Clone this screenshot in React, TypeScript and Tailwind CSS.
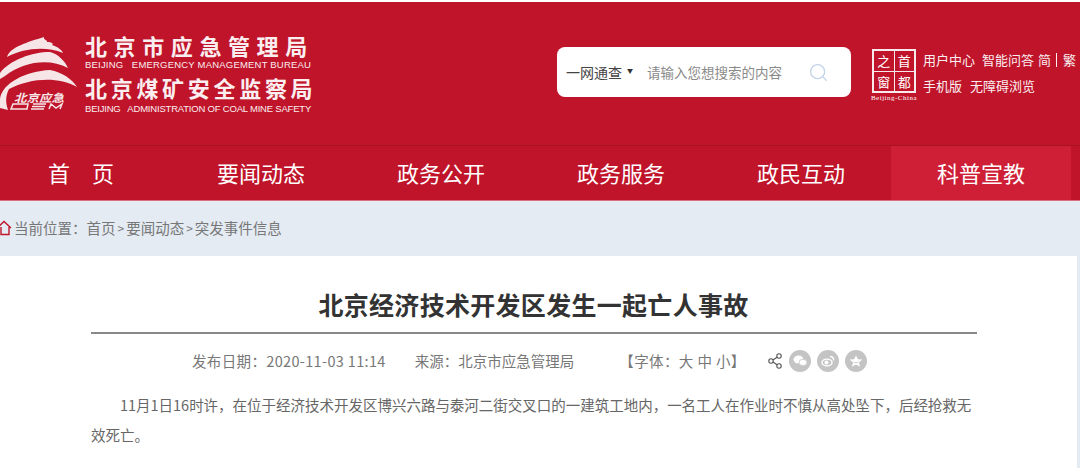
import React from 'react';
import { Search } from 'lucide-react';

const NAV = ['首　页', '要闻动态', '政务公开', '政务服务', '政民互动', '科普宣教'];

const Logo: React.FC = () => (
  <svg width="78" height="74" viewBox="0 0 78 74" className="shrink-0">
    <g fill="#f7e6e8">
      <path d="M7 20 C10 10 28 5 44 0 C43 3 48 3 47 5 C52 5 54 7 52 8 C58 10 62 13 63 16 C46 9 24 11 7 20 Z" />
      <path d="M0 36 C10 23 32 15 50 15 C58 17 65 24 68 31 C50 21 24 24 5 39 L0 42 Z" />
      <path d="M0 62 C2 46 26 34 50 33 C62 35 72 42 77 50 C58 39 30 41 9 52 C6 58 5 64 8 73 L0 71 Z" />
    </g>
    <text x="14" y="65" fill="#f7e6e8" fontSize="11" fontWeight="700" fontStyle="italic" fontFamily="'Noto Sans CJK SC', sans-serif" textLength="50" lengthAdjust="spacingAndGlyphs">北京应急</text>
    <g fill="none" stroke="#f7e6e8" strokeWidth="1.5">
      <path d="M13 67 H28 L27 72 H11 Z" />
      <path d="M33 67 H46 M32 69.5 H45 M31 72 H44" />
      <path d="M49 72 L51 67 L56 71 L62 67 L60 72" />
    </g>
  </svg>
);

const CapitalMark: React.FC = () => (
  <div className="flex flex-col items-center w-[48px] shrink-0">
    <div className="grid grid-cols-2 grid-rows-2 gap-[1px] w-[44px] h-[44px] border-2 border-[#f9e9eb] bg-[#f9e9eb]">
      <span className="bg-[#bf142a] flex items-center justify-center text-[13px] leading-none">之</span>
      <span className="bg-[#bf142a] flex items-center justify-center text-[13px] leading-none">首</span>
      <span className="bg-[#bf142a] flex items-center justify-center text-[13px] leading-none">窗</span>
      <span className="bg-[#bf142a] flex items-center justify-center text-[13px] leading-none">都</span>
    </div>
    <span className="text-[7px] leading-[9px] mt-[1px] whitespace-nowrap tracking-[0.5px] font-['Liberation_Serif',serif]">Beijing-China</span>
  </div>
);

const ShareDot: React.FC<{ children: React.ReactNode }> = ({ children }) => (
  <span className="w-[22px] h-[22px] rounded-full bg-[#c4c4c4] flex items-center justify-center">{children}</span>
);

const App: React.FC = () => {
  return (
    <div className="w-[1080px] h-[468px] overflow-hidden bg-white font-['Noto_Sans_CJK_SC','Liberation_Sans',sans-serif]">
      {/* Header */}
      <header className="mt-[2px] h-[144px] bg-[#bf142a] border-b border-[#a81225] text-white flex items-start">
        <div className="mt-[35px]"><Logo /></div>
        <div className="ml-[7px] mt-[29px] w-[228px] text-[#fbeef0]">
          <div className="text-[22px] leading-[28px] font-semibold tracking-[6.6px] whitespace-nowrap">北京市应急管理局</div>
          <div className="text-[9.5px] leading-[12px] whitespace-pre font-['Liberation_Sans',sans-serif] tracking-[0.2px]">BEIJING   EMERGENCY MANAGEMENT BUREAU</div>
          <div className="text-[22px] leading-[30px] font-semibold tracking-[3.7px] whitespace-nowrap mt-[1px]">北京煤矿安全监察局</div>
          <div className="text-[9.5px] leading-[14px] whitespace-pre font-['Liberation_Sans',sans-serif] tracking-[-0.2px]">BEIJING   ADMINISTRATION OF COAL MINE SAFETY</div>
        </div>
        {/* Search */}
        <div className="ml-[244px] mt-[45px] w-[294px] h-[50px] bg-white rounded-[8px] flex items-center pl-[9px] pr-[22px] text-[14px]">
          <span className="text-[#444444] whitespace-nowrap">一网通查</span>
          <span className="ml-[5px] mb-[2px] text-[#333333] text-[6px] leading-none">▼</span>
          <span className="ml-[14px] text-[#8a8a8a] text-[13.5px] whitespace-nowrap flex-1">请输入您想搜索的内容</span>
          <Search size={21} strokeWidth={1.5} className="text-[#c3d3e8]" />
        </div>
        {/* Links */}
        <div className="ml-[19px] mt-[47px]"><CapitalMark /></div>
        <div className="ml-[5px] mt-[44px] text-[13px] text-[#fbeef0] whitespace-nowrap">
          <div className="h-[27px] flex items-center">
            <span>用户中心</span>
            <span className="ml-[7px]">智能问答</span>
            <span className="ml-[4px]">简</span>
            <span className="ml-[5px] mr-[6px] w-[1px] h-[14px] bg-[#fbeef0]" />
            <span>繁</span>
          </div>
          <div className="h-[25px] flex items-center">
            <span>手机版</span>
            <span className="ml-[8px]">无障碍浏览</span>
          </div>
        </div>
      </header>

      {/* Nav */}
      <nav className="h-[55px] bg-[#bf142a] border-b border-[#d9707e] flex -ml-[9px] text-white text-[22px] w-[1089px]">
        {NAV.map((item, i) => (
          <a key={item} className={`w-[180px] pb-[2px] flex items-center justify-center whitespace-nowrap ${i === 5 ? 'bg-[#ce1f36]' : ''}`}>
            {item}
          </a>
        ))}
      </nav>

      {/* Breadcrumb */}
      <div className="h-[55px] pb-[2px] bg-[#e4ebf3] flex items-center text-[14.5px] text-[#777777] whitespace-nowrap">
        <svg width="12" height="18" viewBox="0 0 12 18" fill="none" stroke="#bf142a" strokeWidth="1.4" className="mr-[2px]">
          <path d="M-3 9 L4 2.5 L11 9" />
          <path d="M1 8 V15.5 H9 V8" />
        </svg>
        <span>当前位置：首页</span>
        <span className="text-[12px] mx-[2px]">&gt;</span>
        <span>要闻动态</span>
        <span className="text-[12px] mx-[2px]">&gt;</span>
        <span>突发事件信息</span>
      </div>

      {/* Article */}
      <div className="bg-[#e4ebf3] h-[212px] pr-[3px]">
        <article className="bg-white h-full px-[91px] text-[#666666]">
          <h1 className="pt-[31px] pr-[1px] w-[886px] h-[76px] text-center text-[25px] leading-[34px] font-bold text-[#333333] tracking-[0.3px]">北京经济技术开发区发生一起亡人事故</h1>
          <div className="border-t-2 border-[#888888] w-[886px]" />
          <div className="h-[54px] flex items-center text-[14.5px] text-[#777777] whitespace-nowrap pl-[101px] w-[886px]">
            <span className="tracking-[0.35px]">发布日期：2020-11-03 11:14</span>
            <span className="ml-[29px]">来源：北京市应急管理局</span>
            <span className="ml-[45px] tracking-[0.4px]">【字体：大 中 小】</span>
            <svg width="14" height="16" viewBox="0 0 14 16" fill="none" stroke="#555555" strokeWidth="1.1" className="ml-[22px]">
              <circle cx="3" cy="8" r="2.2" />
              <circle cx="11" cy="3" r="2.2" />
              <circle cx="11" cy="13" r="2.2" />
              <path d="M5 7 L9 4.2 M5 9 L9 11.8" />
            </svg>
            <div className="ml-[7px] flex gap-[6px]">
              <ShareDot>
                <svg width="14" height="12" viewBox="0 0 14 12" fill="#ffffff"><ellipse cx="5.5" cy="4.5" rx="5" ry="4" /><ellipse cx="10" cy="7.5" rx="4" ry="3.2" stroke="#c4c4c4" strokeWidth="0.8" /></svg>
              </ShareDot>
              <ShareDot>
                <svg width="14" height="12" viewBox="0 0 14 12" fill="none" stroke="#ffffff" strokeWidth="1.4"><ellipse cx="6" cy="7.5" rx="5" ry="3.4" /><circle cx="5.5" cy="7.5" r="1.4" fill="#ffffff" /><path d="M9 1.5 C11.5 1.5 13 3 12.5 5.5" /></svg>
              </ShareDot>
              <ShareDot>
                <svg width="14" height="14" viewBox="0 0 24 24" fill="#ffffff"><path fillRule="evenodd" d="M12 2 L15 9 L23 9.5 L17 14.5 L19 22 L12 18 L5 22 L7 14.5 L1 9.5 L9 9 Z M7 12 C9 15 14 15 17 12 C15 17 9 17 7 12 Z" /></svg>
              </ShareDot>
            </div>
          </div>
          <p className="mt-[2px] text-[14.5px] leading-[30px] text-[#666666] indent-[29px] w-[886px] tracking-[-0.015px]">
            11月1日16时许，在位于经济技术开发区博兴六路与泰河二街交叉口的一建筑工地内，一名工人在作业时不慎从高处坠下，后经抢救无效死亡。
          </p>
        </article>
      </div>
    </div>
  );
};

export default App;
